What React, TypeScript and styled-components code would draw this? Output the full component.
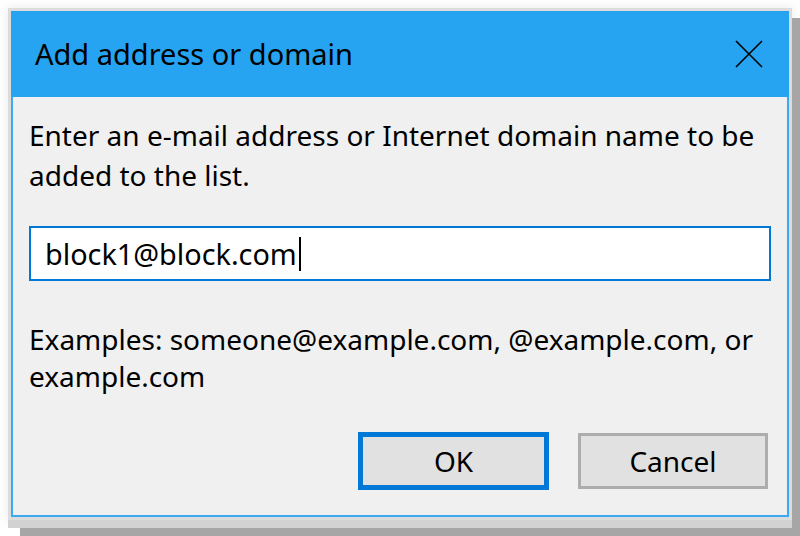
import styled, { createGlobalStyle } from "styled-components";

const GlobalStyle = createGlobalStyle`
  html, body {
    margin: 0;
    padding: 0;
    background: #ffffff;
  }
  body {
    font-family: "Noto Sans", "Open Sans", sans-serif;
    color: #000;
  }
`;

const Stage = styled.div`
  width: 800px;
  height: 536px;
  padding: 11px;
  box-sizing: border-box;
  overflow: hidden;
  background: #ffffff;
`;

const Dialog = styled.div`
  width: 778px;
  height: 506px;
  box-sizing: border-box;
  border: 2px solid #3daaf0;
  background: #f0f0f0;
  display: flex;
  flex-direction: column;
  box-shadow: 0 0 0 3px #dcdcdc, 0 8px 0 3px #d2d2d2, 19px 17px 0 10px #a6a6a6,
    0 0 10px 4px rgba(0, 0, 0, 0.08);
`;

const TitleBar = styled.div`
  height: 86px;
  margin: -2px -2px 0;
  padding: 0 26px 0 24px;
  background: #26a4f1;
  display: flex;
  align-items: center;
  justify-content: space-between;
`;

const Title = styled.div`
  font-size: 29px;
  line-height: 1;
  padding-bottom: 2px;
`;

const CloseIcon = styled.svg`
  width: 28px;
  height: 28px;
`;

const Body = styled.div`
  flex: 1;
  padding: 18px 16px 0 16px;
  display: flex;
  flex-direction: column;
`;

const Text = styled.p<{ $gap?: number; $lh?: number }>`
  margin: 0;
  margin-top: ${(p) => p.$gap ?? 0}px;
  font-size: 28px;
  line-height: ${(p) => p.$lh ?? 40}px;
`;

const Field = styled.div`
  margin-top: 31px;
  height: 55px;
  box-sizing: border-box;
  border: 2px solid #0078d7;
  background: #ffffff;
  padding-left: 14px;
  display: flex;
  align-items: center;
  font-size: 28.8px;
`;

const Caret = styled.span`
  width: 2px;
  height: 34px;
  margin-left: 2px;
  background: #000;
`;

const ButtonRow = styled.div`
  margin-top: 37px;
  padding-right: 3px;
  display: flex;
  justify-content: flex-end;
  align-items: center;
  gap: 29px;
`;

const Button = styled.div<{ $primary?: boolean }>`
  width: ${(p) => (p.$primary ? 191 : 190)}px;
  height: ${(p) => (p.$primary ? 58 : 56)}px;
  box-sizing: border-box;
  border: ${(p) => (p.$primary ? "5px solid #0078d7" : "3px solid #adadad")};
  background: #e1e1e1;
  display: flex;
  align-items: center;
  justify-content: center;
  font-size: 28px;
`;

export default function App() {
  return (
    <>
      <GlobalStyle />
      <Stage>
        <Dialog>
          <TitleBar>
            <Title>Add address or domain</Title>
            <CloseIcon viewBox="0 0 28 28">
              <path d="M1 1 L27 27 M27 1 L1 27" stroke="#000" strokeWidth="1.6" fill="none" />
            </CloseIcon>
          </TitleBar>
          <Body>
            <Text>
              Enter an e-mail address or Internet domain name to be added to the list.
            </Text>
            <Field>
              block1@block.com
              <Caret />
            </Field>
            <Text $gap={40} $lh={37}>
              Examples: someone@example.com, @example.com, or example.com
            </Text>
            <ButtonRow>
              <Button $primary>OK</Button>
              <Button>Cancel</Button>
            </ButtonRow>
          </Body>
        </Dialog>
      </Stage>
    </>
  );
}
